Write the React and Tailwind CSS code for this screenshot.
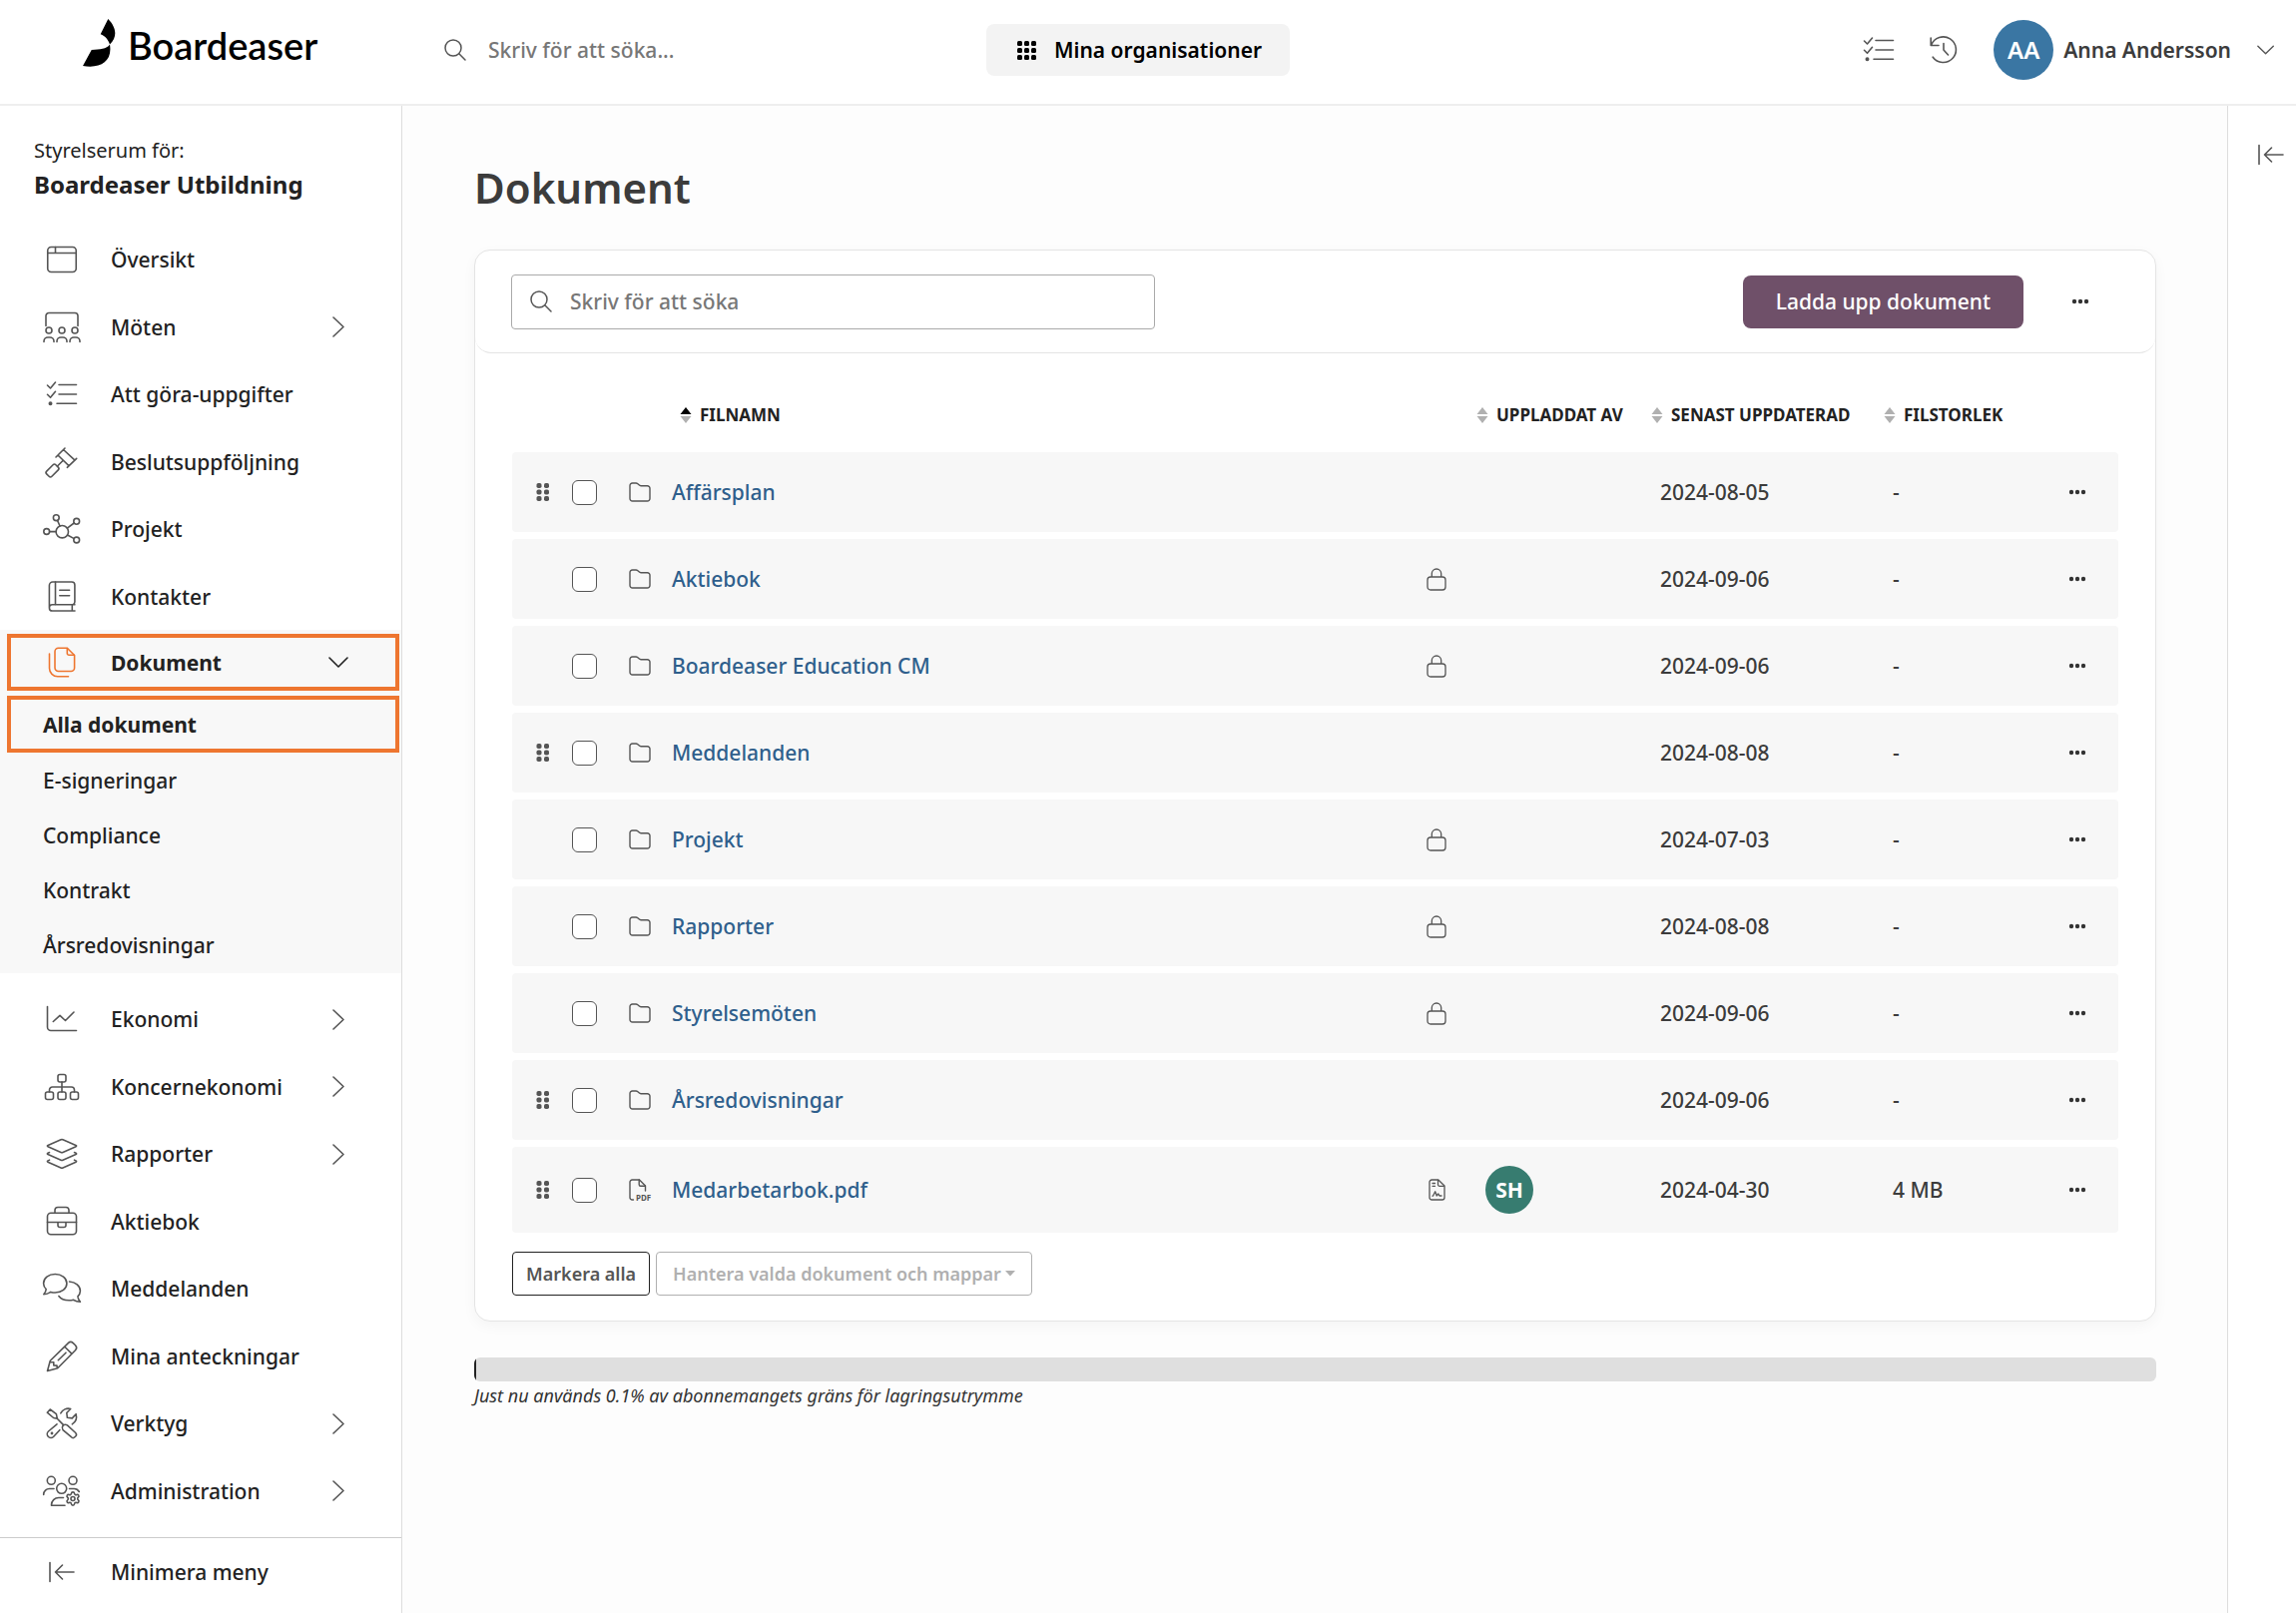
import { Settings } from "lucide-react";

const ICONS = {
  overview: (
    <>
      <rect x="4.75" y="3.5" width="28.5" height="25" rx="3.5" />
      <path d="M4.75 9.5h28.5M12.5 3.5v6" />
    </>
  ),
  meetings: (
    <>
      <path d="M3 14.5V4.5a3 3 0 0 1 3-3h26a3 3 0 0 1 3 3v10" />
      <circle cx="6" cy="19" r="3" />
      <circle cx="19" cy="19" r="3" />
      <circle cx="32" cy="19" r="3" />
      <path d="M1 30.5V30a4 4 0 0 1 4-4h2a4 4 0 0 1 4 4v.5M14 30.5V30a4 4 0 0 1 4-4h2a4 4 0 0 1 4 4v.5M27 30.5V30a4 4 0 0 1 4-4h2a4 4 0 0 1 4 4v.5" />
    </>
  ),
  tasks: (
    <>
      <path d="M4.5 7l3 3 5-6M4.5 16.3l3 3 5-6M16 6.5h17.5M16 16h17.5M14 25.2h19.5" />
      <circle cx="7.5" cy="25.2" r="1.2" fill="currentColor" />
    </>
  ),
  gavel: (
    <>
      <path d="M13 11 22 2M24.3 21.3l9.4-9M15 9l11.2 10.8M20.5 3.5 32 14.2M20 14.5l-5.5 5.5" />
      <rect x="3" y="20.8" width="13" height="7.4" rx="2" transform="rotate(-45 9.5 24.5)" />
    </>
  ),
  project: (
    <>
      <circle cx="19.3" cy="18.7" r="6.2" />
      <circle cx="13.3" cy="4.7" r="2.9" />
      <circle cx="33.7" cy="8.3" r="2.9" />
      <circle cx="33.7" cy="27" r="2.9" />
      <circle cx="3.7" cy="18.5" r="2.9" />
      <path d="M14.5 7.4 17 13M24.4 15.1l6.8-5.1M24.6 22l6.6 3.6M6.6 18.6h6.5" />
    </>
  ),
  contacts: (
    <>
      <path d="M32 23.8H9.5a3.1 3.1 0 0 0 0 6.2H32M29.3 24v6M6.4 27V4.5A3.5 3.5 0 0 1 9.9 1h19a3 3 0 0 1 3 3v17a3 3 0 0 1-2 2.8" />
      <path d="M12.5 1v22.5M16.8 9.3h9.8M16.8 14.7h9.8" />
    </>
  ),
  documents: (
    <>
      <path d="M15.5 1.2h8.8l7.3 7.3V21a3.5 3.5 0 0 1-3.5 3.5H15.5A3.5 3.5 0 0 1 12 21V4.7a3.5 3.5 0 0 1 3.5-3.5z" />
      <path d="M24.3 1.5v5a1.8 1.8 0 0 0 1.8 1.8h5.2M6.5 7v14.5a8.3 8.3 0 0 0 8.3 8.3h10.7" />
    </>
  ),
  economy: <path d="M4.5 3.5V24A3.5 3.5 0 0 0 8 27.5h25.5M10.3 18.5l6.7-6.2 5.5 5.2L31 9" />,
  group: (
    <>
      <rect x="15" y="3.5" width="8" height="7.5" rx="2" />
      <rect x="2.5" y="21" width="8" height="7.5" rx="2" />
      <rect x="15" y="21" width="8" height="7.5" rx="2" />
      <rect x="27.5" y="21" width="8" height="7.5" rx="2" />
      <path d="M19 11v10M6.5 21v-2a3 3 0 0 1 3-3h19a3 3 0 0 1 3 3v2" />
    </>
  ),
  reports: (
    <>
      <path d="M18 1.8 5 7.4c-.8.4-.8 1 0 1.4l13 5.7c.7.3 1.3.3 2 0l13-5.7c.8-.4.8-1 0-1.4L20 1.8c-.7-.3-1.3-.3-2 0z" />
      <path d="M6.5 14.5 5 15.2c-.8.4-.8 1 0 1.4l13 5.7c.7.3 1.3.3 2 0l13-5.7c.8-.4.8-1 0-1.4l-1.5-.7" />
      <path d="M6.5 22.2 5 22.9c-.8.4-.8 1 0 1.4L18 30c.7.3 1.3.3 2 0l13-5.7c.8-.4.8-1 0-1.4l-1.5-.7" />
    </>
  ),
  briefcase: (
    <>
      <rect x="4.5" y="7.3" width="29" height="21.5" rx="3.5" />
      <path d="M12 7.3V4.5a3 3 0 0 1 3-3h8a3 3 0 0 1 3 3v2.8M4.5 16.5h29M15 16.5v3a2 2 0 0 0 2 2h4a2 2 0 0 0 2-2v-3" />
    </>
  ),
  messages: (
    <>
      <path d="M12.2 1.5c6.5 0 11.7 4 11.7 9.3S18.7 20 12.2 20c-1.5 0-3-.2-4.4-.6C6 20.6 3.6 21.7.8 21.7c1.4-1.5 2.3-3.3 2.4-5.2C1.5 15 .6 13 .6 10.8c0-5.3 5.1-9.3 11.6-9.3z" />
      <path d="M26.5 9c6 .3 10.9 4.2 10.9 9.3 0 2.2-.9 4-2.5 5.5.1 2 1 3.8 2.5 5.4-2.8 0-5-.8-7-2-1.3.4-2.8.6-4.3.6-4.5 0-8.2-1.5-10.2-4.3" />
    </>
  ),
  pencil: (
    <path d="M4.5 30.5 7 21.2a3 3 0 0 1 .8-1.4L25.3 2.6a3.6 3.6 0 0 1 5 0l2.2 2.2a3.6 3.6 0 0 1 0 5L15.2 27.2a3 3 0 0 1-1.4.8zM21.8 6.2l7.2 7.2M15.3 19.7l7.7-7.5M7.2 21.5l3.6.3v3.1l3.2.2.3 2.8" />
  ),
  tools: (
    <>
      <path d="M4.3 5.2 7.2 2l6.2 4.7.9 4.5-3.7-.7zM14.3 11.2l6 6.2M20 22.6a3.8 3.8 0 0 1 0-4.3 3.8 3.8 0 0 1 4.4-.4l8.3 7.6a2.5 2.5 0 0 1 0 3.5l-.8.7a2.5 2.5 0 0 1-3.5 0z" />
      <path d="M14 16.8 5.5 24a3.7 3.7 0 0 0 5 5.5l6.3-6.8M17.8 5.8a8.5 8.5 0 0 1 9.9-4.3l-3.9 4 .6 4.8 4.9.6 3.8-4.2a9 9 0 0 1-3.8 10.1" />
      <circle cx="9" cy="26" r=".6" fill="currentColor" />
    </>
  ),
  admin: (
    <>
      <circle cx="8.3" cy="5.3" r="4" />
      <circle cx="30" cy="5.3" r="4" />
      <circle cx="18.7" cy="13.3" r="5" />
      <path d="M.7 19.5V19a5.8 5.8 0 0 1 5.8-5.5H11M26.5 13.5h4a6 6 0 0 1 5.8 3M22 30.3H8.5v-.5a7.3 7.3 0 0 1 7.3-7.3h4.7" />
      <Settings x="22" y="15.5" width="16" height="16" strokeWidth={2.4} />
    </>
  ),
};

const MENU_TOP = [
  { label: "Översikt", icon: "overview" },
  { label: "Möten", icon: "meetings", more: true },
  { label: "Att göra-uppgifter", icon: "tasks" },
  { label: "Beslutsuppföljning", icon: "gavel" },
  { label: "Projekt", icon: "project" },
  { label: "Kontakter", icon: "contacts" },
];

const MENU_DOCUMENTS = ["E-signeringar", "Compliance", "Kontrakt", "Årsredovisningar"];

const MENU_BOTTOM = [
  { label: "Ekonomi", icon: "economy", more: true },
  { label: "Koncernekonomi", icon: "group", more: true },
  { label: "Rapporter", icon: "reports", more: true },
  { label: "Aktiebok", icon: "briefcase" },
  { label: "Meddelanden", icon: "messages" },
  { label: "Mina anteckningar", icon: "pencil" },
  { label: "Verktyg", icon: "tools", more: true },
  { label: "Administration", icon: "admin", more: true },
];

const FILES = [
  { name: "Affärsplan", date: "2024-08-05", size: "-", drag: true },
  { name: "Aktiebok", date: "2024-09-06", size: "-", locked: true },
  { name: "Boardeaser Education CM", date: "2024-09-06", size: "-", locked: true },
  { name: "Meddelanden", date: "2024-08-08", size: "-", drag: true },
  { name: "Projekt", date: "2024-07-03", size: "-", locked: true },
  { name: "Rapporter", date: "2024-08-08", size: "-", locked: true },
  { name: "Styrelsemöten", date: "2024-09-06", size: "-", locked: true },
  { name: "Årsredovisningar", date: "2024-09-06", size: "-", drag: true },
  { name: "Medarbetarbok.pdf", date: "2024-04-30", size: "4 MB", drag: true, pdf: true, owner: "SH" },
];

function Icon({ name, className = "text-[#555]" }) {
  return (
    <svg
      width="38"
      height="32"
      viewBox="0 0 38 32"
      fill="none"
      stroke="currentColor"
      strokeWidth="1.6"
      strokeLinecap="round"
      strokeLinejoin="round"
      className={`shrink-0 overflow-visible ${className}`}
      aria-hidden="true"
    >
      {ICONS[name]}
    </svg>
  );
}

function SearchIcon() {
  return (
    <svg width="22" height="22" viewBox="0 0 22 22" fill="none" stroke="#555" strokeWidth="1.5" strokeLinecap="round" className="shrink-0" aria-hidden="true">
      <circle cx="9" cy="9" r="8" />
      <path d="M14.8 14.8 21 21" />
    </svg>
  );
}

function Chevron({ down, small, className = "" }) {
  const d = down ? "M1 6l9 9 9-9" : "M5 1l10 9.5L5 20";
  return (
    <svg width={small ? 18 : 21} height={small ? 18 : 21} viewBox="0 0 21 21" fill="none" stroke="currentColor" strokeWidth="1.6" strokeLinecap="round" strokeLinejoin="round" className={`shrink-0 ${className}`} aria-hidden="true">
      <path d={d} />
    </svg>
  );
}

function CollapseIcon() {
  return (
    <svg width="26" height="22" viewBox="0 0 26 22" fill="none" stroke="#555" strokeWidth="1.6" strokeLinecap="round" strokeLinejoin="round" className="shrink-0" aria-hidden="true">
      <path d="M1 1.5v19M25 11H6.5M13.5 4l-7 7 7 7" />
    </svg>
  );
}

function Dots() {
  return (
    <svg width="18" height="6" viewBox="0 0 18 6" fill="#333" aria-hidden="true">
      <circle cx="3" cy="3" r="2.2" />
      <circle cx="9" cy="3" r="2.2" />
      <circle cx="15" cy="3" r="2.2" />
    </svg>
  );
}

function SortArrows({ active }) {
  return (
    <svg width="12" height="18" viewBox="0 0 12 18" aria-hidden="true" className="shrink-0">
      <path d="M6 1l5.5 7H.5z" fill={active ? "#000" : "#b0b0b0"} />
      <path d="M6 17l5.5-7H.5z" fill="#b0b0b0" />
    </svg>
  );
}

function FolderIcon() {
  return (
    <svg width="22" height="20" viewBox="0 0 22 20" fill="none" stroke="#555" strokeWidth="1.4" strokeLinejoin="round" aria-hidden="true">
      <path d="M1 3.5A2.5 2.5 0 0 1 3.5 1h3.6c.7 0 1.3.3 1.8.7l1.5 1.4c.4.4 1 .6 1.6.6h6.5A2.5 2.500 0 0 1 21 6.200v10.300a2.500 2.500 0 0 1-2.500 2.500h-15A2.500 2.500 0 0 1 1 16.500z" />
    </svg>
  );
}

function PdfIcon() {
  return (
    <svg width="22" height="22" viewBox="0 0 22 22" fill="none" stroke="#555" strokeWidth="1.4" strokeLinecap="round" strokeLinejoin="round" className="overflow-visible" aria-hidden="true">
      <path d="M4.5 21H3.3A2.3 2.3 0 0 1 1 18.7V3.3A2.3 2.3 0 0 1 3.3 1h7.2l6 6v5" />
      <path d="M10.2 1v4.8a1.5 1.5 0 0 0 1.5 1.5h4.6" />
      <text x="7" y="21.5" fontSize="8" fontWeight="700" fill="#555" stroke="none">PDF</text>
    </svg>
  );
}

function LockIcon() {
  return (
    <svg width="20" height="23" viewBox="0 0 20 23" fill="none" stroke="#555" strokeWidth="1.3" strokeLinejoin="round" aria-label="Låst">
      <rect x="1" y="9" width="18" height="13" rx="3" />
      <path d="M5.3 9V5.7a4.7 4.7 0 0 1 9.4 0V9" />
    </svg>
  );
}

function SignedIcon() {
  return (
    <svg width="17" height="22" viewBox="0 0 17 22" fill="none" stroke="#555" strokeWidth="1.3" strokeLinecap="round" strokeLinejoin="round" aria-label="Signering">
      <path d="M3.3 1h6.5L16 7v11.7a2.3 2.3 0 0 1-2.3 2.3H3.3A2.3 2.3 0 0 1 1 18.7V3.3A2.3 2.3 0 0 1 3.3 1z" />
      <path d="M9.5 1.5v4.3A1.5 1.5 0 0 0 11 7.3h4.5M4 4.5h2.5M4 7.3h2.5M4 17.2h.5l2.2-4.4 1.5 4.2 1.6-2 1.2 2H13" />
    </svg>
  );
}

function DragHandle() {
  return (
    <svg width="14" height="20" viewBox="0 0 14 20" fill="#555" aria-hidden="true">
      {[1, 7.5, 14].map((y) =>
        [0.5, 8].map((x) => <rect key={`${x}-${y}`} x={x} y={y} width="5" height="5" rx="1.8" />),
      )}
    </svg>
  );
}

function MenuItem({ label, icon, more }) {
  return (
    <li className="h-[68px] even:h-[67px]">
      <a href="#" className="flex h-full items-center pr-[52px] pl-[43px]">
        <Icon name={icon} />
        <span className="ml-[30px] flex-1">{label}</span>
        {more && <Chevron className="text-[#555]" />}
      </a>
    </li>
  );
}

function Header() {
  return (
    <header className="flex h-[106px] shrink-0 items-start border-b-2 border-[#eee] bg-white">
      <a href="#" className="flex w-[402px] shrink-0 items-center gap-3 pt-[19px] pl-[83px]">
        <svg width="33" height="48" viewBox="0 0 33 48" aria-hidden="true">
          <path d="M25.3 0c7.5 7.5 10.3 17.5 1.7 25.5-1.5-4.5-4.5-8.5-9.3-10.2z" />
          <path d="M27 25.5c-3.5 5-9.5 4.5-18.3 5.5L0 47c17 3 30-4 27-21.5z" />
        </svg>
        <span className="pt-1 font-[Lato] text-[38px] leading-9 font-semibold text-black">Boardeaser</span>
      </a>
      <div className="flex min-w-0 flex-1 items-center pt-5 pr-[21px]">
        <label className="flex w-[586px] items-center gap-[22px] pl-[43px]">
          <SearchIcon />
          <input type="search" aria-label="Sök" placeholder="Skriv för att söka..." className="min-w-0 flex-1 font-medium outline-none placeholder:text-[#777]" />
        </label>
        <button type="button" className="flex h-[52px] shrink-0 items-center gap-[18px] rounded-lg bg-[#f3f3f3] pr-7 pl-[31px] font-semibold text-black">
          <svg width="19" height="19" viewBox="0 0 19 19" aria-hidden="true">
            {[0, 7, 14].map((y) => [0, 7, 14].map((x) => <rect key={`${x}-${y}`} x={x} y={y} width="5" height="5" rx="1.5" />))}
          </svg>
          Mina organisationer
        </button>
        <div className="flex flex-1 items-center justify-end">
          <button type="button" aria-label="Uppgifter" className="mr-8">
            <Icon name="tasks" />
          </button>
          <button type="button" aria-label="Historik" className="mr-9">
            <svg width="28" height="28" viewBox="0 0 28 28" fill="none" stroke="#555" strokeWidth="1.6" strokeLinecap="round" strokeLinejoin="round" aria-hidden="true">
              <path d="M1.2 2v7.5H9M1.7 9A12.8 12.8 0 1 1 3.2 21.2M14 7.5V14l4.5 5" />
            </svg>
          </button>
          <button type="button" className="flex items-center">
            <span className="flex size-[60px] items-center justify-center rounded-full bg-[#3a76a3] text-2xl font-semibold text-white">AA</span>
            <span className="mr-[26px] ml-2.5 font-semibold text-[#3c3c3c]">Anna Andersson</span>
            <Chevron down small className="text-[#555]" />
          </button>
        </div>
      </div>
    </header>
  );
}

function Sidebar() {
  return (
    <aside className="flex w-[403px] shrink-0 flex-col border-r border-[#ddd] bg-white text-[#222]">
      <div className="px-[34px] pt-[31px] pb-[22px]">
        <p className="text-xl leading-7">Styrelserum för:</p>
        <p className="text-2xl leading-[39px] font-bold">Boardeaser Utbildning</p>
      </div>
      <nav aria-label="Huvudmeny" className="font-medium">
        <ul>
          {MENU_TOP.map((item) => (
            <MenuItem key={item.label} {...item} />
          ))}
        </ul>
        <div className="bg-[#f8f8f8] pt-1 pb-px">
          <button type="button" aria-expanded="true" className="ml-[7px] flex h-[57px] w-[393px] items-center border-4 border-[#ee7630] pr-[46px] pl-8 text-left font-bold">
            <Icon name="documents" className="text-[#ee7630]" />
            <span className="ml-[30px] flex-1">Dokument</span>
            <Chevron down />
          </button>
          <a href="#" className="mt-[5px] ml-[7px] flex h-[57px] w-[393px] items-center border-4 border-[#ee7630] px-8 font-bold">
            Alla dokument
          </a>
          <ul>
            {MENU_DOCUMENTS.map((label) => (
              <li key={label}>
                <a href="#" className="flex h-[55px] items-center pl-[43px]">
                  {label}
                </a>
              </li>
            ))}
          </ul>
        </div>
        <ul className="pt-3">
          {MENU_BOTTOM.map((item) => (
            <MenuItem key={item.label} {...item} />
          ))}
        </ul>
      </nav>
      <button type="button" className="mt-auto flex h-[76px] items-center gap-9 border-t border-[#ccc] pb-2 pl-[49px] font-medium">
        <CollapseIcon />
        Minimera meny
      </button>
    </aside>
  );
}

function SortHeader({ active, className = "pl-1", children }) {
  return (
    <th aria-sort={active ? "ascending" : undefined} className={className}>
      <button type="button" className="flex items-center gap-2 whitespace-nowrap uppercase">
        <SortArrows active={active} />
        {children}
      </button>
    </th>
  );
}

function FileRow({ file }) {
  return (
    <tr className={`bg-[#f7f7f7] ${file.pdf ? "h-[86px]" : "h-20"}`}>
      <td className="rounded-l-sm pl-6">{file.drag && <DragHandle />}</td>
      <td>
        <input type="checkbox" aria-label={`Markera ${file.name}`} className="ml-3 block size-[25px] appearance-none rounded-md border border-[#555] bg-white" />
      </td>
      <td className="pl-[13px]">{file.pdf ? <PdfIcon /> : <FolderIcon />}</td>
      <td>
        <a href="#" className="font-medium text-[#2f5f8c]">
          {file.name}
        </a>
      </td>
      <td>
        <div className="flex justify-center">
          {file.locked && <LockIcon />}
          {file.pdf && <SignedIcon />}
        </div>
      </td>
      <td className="pl-[13px]">
        {file.owner && (
          <span className="flex size-12 items-center justify-center rounded-full bg-[#377c70] font-bold text-white">{file.owner}</span>
        )}
      </td>
      <td className="pl-[13px]">{file.date}</td>
      <td className="pl-[13px]">{file.size}</td>
      <td className="rounded-r-sm">
        <button type="button" aria-label={`Fler val för ${file.name}`} className="mx-auto block">
          <Dots />
        </button>
      </td>
    </tr>
  );
}

function DocumentCard() {
  return (
    <section className="rounded-2xl border border-[#e4e4e4] bg-white shadow-[0_4px_14px_rgba(0,0,0,0.04)]">
      <div className="flex h-[103px] items-center rounded-2xl border-b border-[#e4e4e4] pr-[66px] pl-9">
        <label className="flex h-[55px] w-[645px] items-center gap-[18px] rounded border border-[#aaa] px-[18px]">
          <SearchIcon />
          <input type="search" aria-label="Sök dokument" placeholder="Skriv för att söka" className="min-w-0 flex-1 font-medium outline-none placeholder:text-[#777]" />
        </label>
        <button type="button" className="ml-auto h-[53px] rounded-lg bg-[#6f5069] px-[33px] font-medium text-white">
          Ladda upp dokument
        </button>
        <button type="button" aria-label="Fler val" className="ml-12 flex h-[53px] w-[18px] items-center">
          <Dots />
        </button>
      </div>
      <div className="px-[37px] pt-6 pb-[25px]">
        <table className="w-full table-fixed border-separate border-spacing-x-0 border-spacing-y-[7px] text-left text-[#3c3c3c]">
          <colgroup>
            <col className="w-12" />
            <col className="w-14" />
            <col className="w-14" />
            <col />
            <col className="w-[72px]" />
            <col className="w-[175px]" />
            <col className="w-[233px]" />
            <col className="w-[157px]" />
            <col className="w-[82px]" />
          </colgroup>
          <thead className="text-[17px] font-bold text-[#222]">
            <tr className="h-[61px]">
              <td colSpan={3} />
              <SortHeader active className="pl-2">Filnamn</SortHeader>
              <td />
              <SortHeader>Uppladdat av</SortHeader>
              <SortHeader>Senast uppdaterad</SortHeader>
              <SortHeader>Filstorlek</SortHeader>
              <td />
            </tr>
          </thead>
          <tbody className="font-medium">
            {FILES.map((file) => (
              <FileRow key={file.name} file={file} />
            ))}
          </tbody>
        </table>
        <div className="mt-3 flex gap-1.5 text-lg font-semibold">
          <button type="button" className="h-11 rounded border border-[#222] px-[13px] text-[#555]">
            Markera alla
          </button>
          <button type="button" disabled aria-haspopup="menu" className="flex h-11 items-center gap-1 rounded border border-[#b0b0b0] px-4 text-[#b0b0b0]">
            Hantera valda dokument och mappar
            <svg width="10" height="6" viewBox="0 0 10 6" fill="currentColor" aria-hidden="true">
              <path d="M0 0h10L5 5.5z" />
            </svg>
          </button>
        </div>
      </div>
    </section>
  );
}

export default function App() {
  return (
    <div className="flex min-h-screen flex-col bg-[#fdfdfd] font-['Noto_Sans',sans-serif] text-[21px] leading-7">
      <Header />
      <div className="flex flex-1">
        <Sidebar />
        <main className="min-w-0 flex-1 pt-[57px] pr-[71px] pl-[72px]">
          <h1 className="mb-[38px] text-[42px] leading-[49px] font-semibold text-[#3c3c3c]">Dokument</h1>
          <DocumentCard />
          <div role="progressbar" aria-label="Lagringsutrymme" aria-valuenow={0.1} aria-valuemin={0} aria-valuemax={100} className="mt-9 h-6 overflow-hidden rounded-md bg-[#dfdfdf]">
            <div className="h-full bg-[#222]" style={{ width: "0.1%" }} />
          </div>
          <p className="text-lg leading-7 text-[#333] italic">Just nu används 0.1% av abonnemangets gräns för lagringsutrymme</p>
        </main>
        <aside className="flex w-[69px] shrink-0 justify-end border-l border-[#ddd] bg-white pt-[38px] pr-3">
          <button type="button" aria-label="Visa panel" className="self-start">
            <CollapseIcon />
          </button>
        </aside>
      </div>
    </div>
  );
}
